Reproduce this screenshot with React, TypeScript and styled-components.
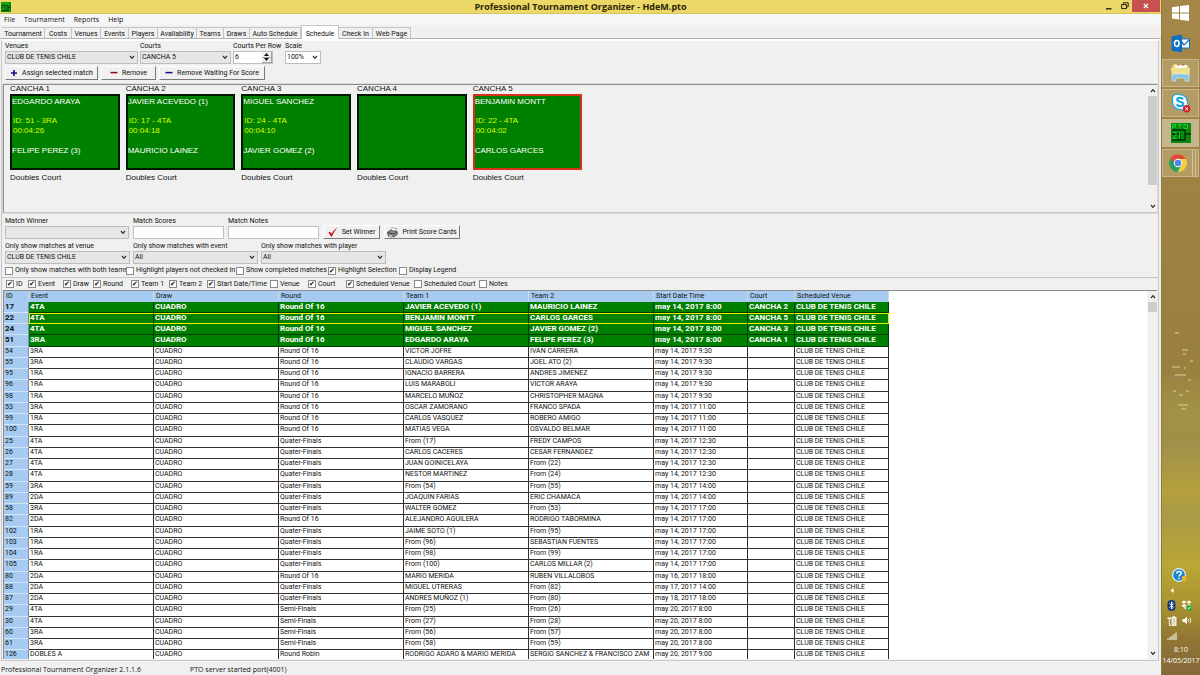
import React from "react";
import styled, { createGlobalStyle, css } from "styled-components";

const UI_FONT = 'Roboto, "Liberation Sans", sans-serif';
const SHELL_FONT = '"Open Sans", "Noto Sans", sans-serif';

const GlobalStyle = createGlobalStyle`
  * { box-sizing: border-box; }
  html, body { margin: 0; padding: 0; }
  body { background: #f0f0f0; color: #111; font: 7px/9px ${UI_FONT}; overflow: hidden; }
  button, input, select { font: inherit; color: inherit; margin: 0; }
`;

/* ---------- shell ---------- */

const Desktop = styled.div`
  display: flex;
  height: 100vh;
`;

const AppWindow = styled.div`
  flex: 1;
  min-width: 0;
  display: flex;
  flex-direction: column;
  background: #f0f0f0;
`;

const TitleBar = styled.header`
  display: flex;
  align-items: center;
  height: 14px;
  background: #ebd867;
  border-bottom: 1px solid #d6c462;
`;

const TitleSide = styled.div<{ $end?: boolean }>`
  width: 60px;
  display: flex;
  align-self: stretch;
  align-items: center;
  justify-content: ${(p) => (p.$end ? "flex-end" : "flex-start")};
  padding: ${(p) => (p.$end ? "0 1px 0 0" : "0 0 0 1px")};
`;

const Title = styled.h1`
  flex: 1;
  margin: 0;
  padding-top: 1px;
  text-align: center;
  font: 700 9px/12px ${SHELL_FONT};
  color: #2a2508;
`;

const CaptionButton = styled.button<{ $close?: boolean }>`
  align-self: flex-start;
  display: grid;
  place-items: center;
  width: ${(p) => (p.$close ? 28 : 16)}px;
  height: 12px;
  padding: 0;
  border: 0;
  background: ${(p) => (p.$close ? "#c75050" : "transparent")};
`;

const MenuBar = styled.nav`
  display: flex;
  align-items: center;
  gap: 9px;
  height: 11px;
  padding: 1px 0 0 4px;
  background: #f5f6f8;
`;

const MenuItem = styled.button`
  padding: 0;
  border: 0;
  background: none;
  font: 7px/10px ${SHELL_FONT};
`;

const TabStrip = styled.div`
  display: flex;
  align-items: flex-end;
  height: 14px;
  padding-left: 2px;
  border-bottom: 1px solid #b4b4b4;
`;

const Tab = styled.button<{ $width: number; $active?: boolean }>`
  width: ${(p) => p.$width}px;
  height: 11px;
  padding: 2px 0 0;
  border: 1px solid #c4c4c4;
  border-width: 1px 1px 0 0;
  background: #f0f0f0;
  text-align: center;
  line-height: 8px;
  white-space: nowrap;
  ${(p) =>
    p.$active &&
    css`
      height: 14px;
      margin-bottom: -1px;
      border-left-width: 1px;
      background: #fff;
    `}
`;

const Page = styled.main`
  flex: 1;
  min-height: 0;
  display: flex;
  flex-direction: column;
  margin: 0 2px 0 1px;
  border: 1px solid #c8c8c8;
  border-top: 2px solid #fff;
  background: #f0f0f0;
`;

const StatusBar = styled.footer`
  display: flex;
  align-items: center;
  height: 14px;
  padding: 4px 0 0 1px;
  font: 7px/10px ${SHELL_FONT};
`;

const StatusCell = styled.span`
  width: 189px;
  white-space: nowrap;
`;

/* ---------- form parts ---------- */

const ControlRow = styled.div<{ $gap: number; $top?: number }>`
  display: flex;
  align-items: flex-end;
  gap: ${(p) => p.$gap}px;
  padding: ${(p) => p.$top ?? 0}px 3px 0;
`;

const Field = styled.label<{ $width: number; $after?: number }>`
  display: flex;
  flex-direction: column;
  width: ${(p) => p.$width}px;
  margin-right: ${(p) => p.$after ?? 0}px;
  white-space: nowrap;
`;

const SelectBox = styled.span<{ $plain?: boolean }>`
  position: relative;
  display: block;
  height: 13px;
  border: 1px solid #bcbcbc;
  background: ${(p) => (p.$plain ? "#fff" : "#e6e6e6")};

  select {
    display: block;
    width: 100%;
    height: 11px;
    padding: 0 10px 0 1px;
    border: 0;
    outline: 0;
    appearance: none;
    background: transparent;
    line-height: 11px;
  }
  svg {
    position: absolute;
    right: 2px;
    top: 3px;
    pointer-events: none;
  }
`;

const TextInput = styled.input`
  width: 100%;
  height: 13px;
  padding: 0 2px;
  border: 1px solid #c0c0c0;
  background: #fff;
  outline: 0;
`;

const NumberBox = styled.span`
  display: flex;
  height: 13px;
  border: 1px solid #c0c0c0;
  background: #fff;

  input {
    flex: 1;
    min-width: 0;
    padding: 0 1px;
    border: 0;
    outline: 0;
    appearance: textfield;
    background: transparent;
  }
  input::-webkit-inner-spin-button { appearance: none; }
`;

const Spinner = styled.span`
  display: flex;
  flex-direction: column;
  width: 10px;

  button {
    flex: 1;
    display: grid;
    place-items: center;
    min-height: 0;
    padding: 0;
    border: 1px solid #a0a0a0;
    border-width: 0 1px 1px 0;
    background: #f0f0f0;
  }
`;

const PushButton = styled.button<{ $width: number }>`
  display: flex;
  align-items: center;
  justify-content: center;
  gap: 4px;
  width: ${(p) => p.$width}px;
  height: 14px;
  padding: 0;
  border: 1px solid;
  border-color: #fff #7a7a7a #7a7a7a #fff;
  background: #f0f0f0;
  white-space: nowrap;

  svg { flex: none; }
`;

const Check = styled.label<{ $width: number }>`
  display: flex;
  align-items: center;
  gap: 2px;
  width: ${(p) => p.$width}px;
  white-space: nowrap;

  input {
    flex: none;
    display: grid;
    place-items: center;
    width: 8px;
    height: 8px;
    appearance: none;
    border: 1px solid #8a8a8a;
    background: #fff;
  }
  input:checked::after {
    content: "✔";
    font: 7px/6px "DejaVu Sans", sans-serif;
    color: #111;
  }
`;

const CheckRow = styled.div<{ $rule?: boolean }>`
  display: flex;
  align-items: center;
  height: 13px;
  padding-left: ${(p) => (p.$rule ? 4 : 3)}px;
  border-top: ${(p) => (p.$rule ? "1px solid #c4c4c4" : "0")};
`;

const Toolbar = styled.section`
  padding: 1px 0 4px;
`;

/* ---------- courts ---------- */

const CourtsPane = styled.section`
  display: flex;
  height: 129px;
  margin: 0 1px 0 1px;
  border: 1px solid #8c8c8c;
  border-width: 1px 0 1px 1px;
  border-bottom-color: #c4c4c4;
  outline: 1px solid #dcdcdc;
  overflow: hidden;
`;

const CourtGrid = styled.div`
  display: grid;
  grid-template-columns: repeat(6, 1fr);
  gap: 6px;
  width: 688px;
  margin-left: 6px;
  font: 8px/10px "Liberation Sans", Arial, sans-serif;
`;

const CourtName = styled.div`
  height: 9px;
  line-height: 8px;
`;

const CourtCard = styled.div<{ $selected?: boolean }>`
  height: 76px;
  margin-bottom: 3px;
  padding-top: 1px;
  border: 2px solid ${(p) => (p.$selected ? "#d8301c" : "#001800")};
  background: #008000;
  color: #fff;
  white-space: nowrap;
`;

const MatchMeta = styled.div`
  padding: 9px 0 10px 1px;
  color: #d8ff00;
`;

const Spacer = styled.div`
  flex: 1;
`;

/* ---------- scroll bar ---------- */

const ScrollTrack = styled.div`
  display: flex;
  flex-direction: column;
  width: 10px;
  background: #f0f0f0;
  border-left: 1px solid #f4f4f4;

  button {
    display: grid;
    place-items: center;
    height: 11px;
    padding: 0;
    border: 0;
    background: transparent;
  }
`;

const ScrollThumb = styled.div<{ $size: number }>`
  height: ${(p) => p.$size}px;
  background: #cdcdcd;
`;

/* ---------- match form / grid ---------- */

const MatchForm = styled.section`
  padding-top: 4px;
`;

const GridPane = styled.section`
  flex: 1;
  min-height: 0;
  display: flex;
  margin: 0 1px 1px 1px;
  border: 1px solid #8c8c8c;
  border-width: 1px 0 0 1px;
  background: #fff;
  overflow: hidden;
`;

const Grid = styled.table`
  align-self: flex-start;
  table-layout: fixed;
  width: 885px;
  border-collapse: separate;
  border-spacing: 0;

  th, td {
    padding: 0 0 0 1px;
    overflow: hidden;
    white-space: nowrap;
    text-align: left;
    vertical-align: top;
    font-weight: inherit;
  }
  thead th {
    height: 11px;
    background: #a6caf0;
    border-right: 1px solid #c9d9ea;
    padding-left: 2px;
    line-height: 11px;
  }
  tbody th {
    background: #a6caf0;
    border-right: 1px solid #7a8fa5;
    border-bottom: 1px solid #d5e4f4;
    padding-left: 1px;
  }
  tbody td {
    border: solid #303030;
    border-width: 0 1px 1px 0;
  }
`;

const Row = styled.tr<{ $live?: boolean; $selected?: boolean }>`
  height: 11px;
  &:nth-child(4n) { height: 12px; }
  ${(p) =>
    p.$live &&
    css`
      font-size: 8px;
      font-weight: 700;
      &&& td { background: #008000; color: #fff; border-color: #003c00; }
    `}
  ${(p) =>
    p.$selected &&
    css`
      &&& td { border-top: 1px solid #e6f000; border-bottom-color: #e6f000; line-height: 8px; }
      &&& th + td { box-shadow: inset 1px 0 #e6f000; }
      &&& td:last-child { border-right-color: #e6f000; }
    `}
`;

/* ---------- taskbar ---------- */

const Taskbar = styled.aside`
  position: relative;
  display: flex;
  flex-direction: column;
  width: 39px;
  border-left: 1px solid #8e7a3c;
  background: linear-gradient(#a5874a 0%, #9f8144 30%, #99803f 55%, #a19044 60%, #a09048 66%, #b5a13c 73%, #a99a45 76%, #b9a636 84%, #a8922f 90%, #8f7434 95%, #84683a 100%);
  color: #fff;
`;

const TaskButton = styled.button<{ $state?: "open" | "active"; $stacked?: boolean }>`
  display: grid;
  place-items: center;
  height: 28px;
  margin: 0 1px 2px 0;
  padding: 0;
  border: 1px solid ${(p) => (p.$state ? "#c9b68a" : "transparent")};
  background: ${(p) => (p.$state === "active" ? "#c4b58c" : p.$state ? "#b39b66" : "transparent")};
  ${(p) =>
    p.$stacked &&
    css`
      padding-right: 5px;
      box-shadow: inset -2px 0 #b39b66, inset -3px 0 #d3c39c, inset -5px 0 #b39b66, inset -6px 0 #d3c39c;
    `}
  &:first-of-type { height: 27px; padding-bottom: 2px; }
`;

const Tray = styled.div`
  display: grid;
  grid-template-columns: 15px 15px;
  grid-auto-rows: 15px;
  place-items: center;
  padding-left: 2px;
`;

const TrayWide = styled.div<{ $height: number }>`
  display: grid;
  place-items: center;
  height: ${(p) => p.$height}px;
  padding-right: 4px;
`;

const Clock = styled.time`
  display: block;
  padding: 1px 0 9px;
  text-align: center;
  font: 7px/11px ${SHELL_FONT};
  white-space: nowrap;
`;

const Lights = styled.svg`
  position: absolute;
  left: 0;
  top: 325px;
  pointer-events: none;
`;

/* ---------- icons ---------- */

const Chevron = ({ up }: { up?: boolean }) => (
  <svg width="6" height="5" viewBox="0 0 6 5" aria-hidden="true">
    <path d={up ? "M1 4L3 1.6L5 4" : "M1 1L3 3.4L5 1"} fill="none" stroke="#333" strokeWidth="1.2" />
  </svg>
);

const Triangle = ({ up }: { up?: boolean }) => (
  <svg width="5" height="3" viewBox="0 0 5 3" aria-hidden="true">
    <path d={up ? "M2.5 0L5 3H0Z" : "M0 0H5L2.5 3Z"} fill="#111" />
  </svg>
);

const PlusIcon = () => (
  <svg width="8" height="8" viewBox="0 0 8 8" aria-hidden="true">
    <path d="M4 1V7M1 4H7" stroke="#10108c" strokeWidth="1.6" />
  </svg>
);

const MinusIcon = ({ color }: { color: string }) => (
  <svg width="8" height="8" viewBox="0 0 8 8" aria-hidden="true">
    <path d="M0.5 3.6H7.5" stroke={color} strokeWidth="1.5" />
  </svg>
);

const TickIcon = () => (
  <svg width="10" height="10" viewBox="0 0 10 10" aria-hidden="true">
    <path d="M0.5 5.5L2 4.8L3.6 6.8C5 4 7 1.8 9.4 0.4C7.2 3 5.4 6 4 9.6H3Z" fill="#d01010" />
  </svg>
);

const PrinterIcon = () => (
  <svg width="11" height="11" viewBox="0 0 11 11" aria-hidden="true">
    <path d="M3.5 4L5 0.8L9.6 1.6L8.4 5Z" fill="#fff" stroke="#777" strokeWidth="0.6" />
    <path d="M0.6 5L3.4 3.4L10 4.4L10.4 7.4L7 10L1 8.4Z" fill="#8d8f8d" stroke="#333" strokeWidth="0.7" />
    <path d="M1 5.6L7 7L10 5" fill="none" stroke="#222" strokeWidth="0.7" />
    <path d="M2 7.4L6 8.4L5 10.2L1.6 9.4Z" fill="#e8e8e8" stroke="#444" strokeWidth="0.5" />
  </svg>
);

const PtoIcon = ({ size }: { size: number }) => (
  <svg width={size} height={size} viewBox="0 0 20 20" aria-hidden="true">
    <rect width="20" height="20" fill="#078a10" />
    <path d="M1 7H14V17H1M14 11H20M1 11H9V17" fill="none" stroke="#032f05" strokeWidth="1.4" />
    <path d="M1.5 6V1.5H4.5V4H1.5M7 1.5H11M9 1.5V6M13 1.5H16.5V5.5H13Z" fill="none" stroke="#23d32c" strokeWidth="0.9" />
    <path d="M2 9.5H5V12L2 15.5H5.5M8.5 9.5V15.5" fill="none" stroke="#23d32c" strokeWidth="0.9" />
  </svg>
);

const WindowsIcon = () => (
  <svg width="17" height="16" viewBox="0 0 17 16" aria-hidden="true">
    <path d="M0 2.3L7 1.3V7.5H0ZM8 1.1L17 0V7.5H8ZM0 8.4H7V14.6L0 13.6ZM8 8.4H17V16L8 14.8Z" fill="#fff" />
  </svg>
);

const OutlookIcon = () => (
  <svg width="19" height="19" viewBox="0 0 19 19" aria-hidden="true">
    <rect x="9" y="5" width="9.5" height="9" fill="#fff" stroke="#1172c4" />
    <path d="M10 7L13 11L18 6" fill="none" stroke="#1172c4" strokeWidth="1.3" />
    <path d="M0.5 2.4L11 0.4V18.6L0.5 16.6Z" fill="#0f6fc2" />
    <ellipse cx="5.8" cy="9.5" rx="2.3" ry="2.9" fill="none" stroke="#fff" strokeWidth="1.5" />
  </svg>
);

const FolderIcon = () => (
  <svg width="21" height="20" viewBox="0 0 21 20" aria-hidden="true">
    <path d="M2 3L4 1H8L9 2.4H18L19 4V9H2Z" fill="#e9d27a" />
    <path d="M5 2H17V5H5Z" fill="#fbfbf2" />
    <path d="M7 2H9M12 2H14" stroke="#b35a3c" />
    <path d="M1 5H20L19 15H2Z" fill="#f3e08c" />
    <path d="M2 18V13Q2 11 4 11H17Q19 11 19 13V18H15V15H6V18Z" fill="#86c5e3" stroke="#d5eef8" strokeWidth="0.6" />
  </svg>
);

const SkypeIcon = () => (
  <svg width="20" height="20" viewBox="0 0 20 20" aria-hidden="true">
    <circle cx="6" cy="6" r="5.4" fill="#1ba5e0" />
    <circle cx="12" cy="12" r="5.6" fill="#1ba5e0" />
    <circle cx="9" cy="9" r="8" fill="#1ba5e0" />
    <circle cx="6" cy="6" r="4.2" fill="#fff" />
    <circle cx="12" cy="12" r="4.4" fill="#fff" />
    <circle cx="9" cy="9" r="6.8" fill="#fff" />
    <path d="M12 6.4C11 4.2 6.2 4.2 6.2 6.8C6.2 9.4 12.2 8.2 12.2 11C12.2 13.8 7 13.8 5.8 11.2" fill="none" stroke="#1ba5e0" strokeWidth="2.2" />
    <circle cx="15.6" cy="15.8" r="3.8" fill="#d3202f" />
    <path d="M14.2 14.4L17 17.2M17 14.4L14.2 17.2" stroke="#fff" strokeWidth="1" />
  </svg>
);

const ChromeIcon = () => (
  <svg width="18" height="18" viewBox="0 0 18 18" aria-hidden="true">
    <circle cx="9" cy="9" r="9" fill="#f7ce3c" />
    <path d="M9 9L1.2 4.5A9 9 0 0 0 8.6 18L12.4 11.2Z" fill="#27a05a" />
    <path d="M1.2 4.5A9 9 0 0 1 16.9 5H9Q6 5.4 5.4 9Z" fill="#dd4b3c" />
    <circle cx="9" cy="9" r="4.2" fill="#fff" />
    <circle cx="9" cy="9" r="3.3" fill="#4a86e8" />
  </svg>
);

const HelpIcon = () => (
  <svg width="14" height="14" viewBox="0 0 14 14" aria-hidden="true">
    <circle cx="7" cy="7" r="6.4" fill="#1b87cf" stroke="#e8f4fb" strokeWidth="1.1" />
    <path d="M4.8 5.4C4.8 2.8 9.4 2.8 9.2 5.4C9 7 7 6.8 7 8.6M7 9.8V11.2" fill="none" stroke="#fff" strokeWidth="1.5" />
    <rect x="10" y="8" width="4" height="5" rx="1" fill="#f0b42c" />
  </svg>
);

const BluetoothIcon = () => (
  <svg width="9" height="11" viewBox="0 0 9 11" aria-hidden="true">
    <rect x="0.5" width="8" height="11" rx="4" fill="#173d7c" />
    <path d="M2.4 3.4L6.4 7.2L4.5 9V2L6.4 3.8L2.4 7.6" fill="none" stroke="#fff" strokeWidth="0.9" />
  </svg>
);

const DropboxIcon = () => (
  <svg width="11" height="11" viewBox="0 0 11 11" aria-hidden="true">
    <path d="M3 0.5L5.5 2L3 3.8L0.5 2.2ZM8 0.5L10.5 2.2L8 3.8L5.5 2ZM3 4L5.5 5.6L3 7.4L0.5 5.6ZM8 4L10.5 5.6L8 7.4L5.5 5.6ZM3 8L5.5 6.6L7 8L5 9.6Z" fill="#fff" />
    <circle cx="8" cy="8" r="3" fill="#3aa63c" />
    <path d="M6.6 8L7.7 9L9.5 7" fill="none" stroke="#fff" strokeWidth="0.9" />
  </svg>
);

const BatteryIcon = () => (
  <svg width="10" height="10" viewBox="0 0 10 10" aria-hidden="true">
    <rect x="5" y="1.4" width="4" height="8" fill="#d9d3bd" stroke="#fff" strokeWidth="0.9" />
    <path d="M6 0.6H8M0.6 2.5H4M1.2 1V2.5M3.4 1V2.5M2.3 3V9.4H4" fill="none" stroke="#fff" strokeWidth="0.9" />
  </svg>
);

const VolumeIcon = () => (
  <svg width="10" height="9" viewBox="0 0 10 9" aria-hidden="true">
    <path d="M0.5 3H2.5L5 0.8V8.2L2.5 6H0.5Z" fill="#fff" />
    <path d="M6.4 3Q7.2 4.5 6.4 6M8 1.8Q9.6 4.5 8 7.2" fill="none" stroke="#fff" strokeWidth="0.8" />
  </svg>
);

const SignalIcon = () => (
  <svg width="10" height="8" viewBox="0 0 10 8" aria-hidden="true">
    <path d="M1 8V6.4M3 8V5M5 8V3.4M7 8V2M9 8V0.4" stroke="#f2eedd" strokeWidth="1.2" />
  </svg>
);

/* ---------- data ---------- */

const tabs: [string, number][] = [
  ["Tournament", 43], ["Costs", 27], ["Venues", 29], ["Events", 28], ["Players", 29], ["Availability", 39],
  ["Teams", 27], ["Draws", 26], ["Auto Schedule", 51], ["Schedule", 38], ["Check In", 34], ["Web Page", 38],
];

type Court = { name: string; top?: string; id?: string; time?: string; bottom?: string; selected?: boolean };
const courts: Court[] = [
  { name: "CANCHA 1", top: "EDGARDO ARAYA", id: "ID: 51 - 3RA", time: "00:04:26", bottom: "FELIPE PEREZ (3)" },
  { name: "CANCHA 2", top: "JAVIER ACEVEDO (1)", id: "ID: 17 - 4TA", time: "00:04:18", bottom: "MAURICIO LAINEZ" },
  { name: "CANCHA 3", top: "MIGUEL SANCHEZ", id: "ID: 24 - 4TA", time: "00:04:10", bottom: "JAVIER GOMEZ (2)" },
  { name: "CANCHA 4" },
  { name: "CANCHA 5", top: "BENJAMIN MONTT", id: "ID: 22 - 4TA", time: "00:04:02", bottom: "CARLOS GARCES", selected: true },
];

const options: [string, number, boolean][] = [
  ["Only show matches with both teams", 121, false],
  ["Highlight players not checked in", 110, false],
  ["Show completed matches", 92, false],
  ["Highlight Selection", 71, true],
  ["Display Legend", 60, false],
];

const columnToggles: [string, number, boolean][] = [
  ["ID", 22, true], ["Event", 35, true], ["Draw", 30, true], ["Round", 38, true], ["Team 1", 38, true],
  ["Team 2", 38, true], ["Start Date/Time", 63, true], ["Venue", 38, false], ["Court", 38, true],
  ["Scheduled Venue", 68, true], ["Scheduled Court", 65, false], ["Notes", 40, false],
];

const columns: [string, number][] = [
  ["ID", 25], ["Event", 125], ["Draw", 125], ["Round", 125], ["Team 1", 125], ["Team 2", 125],
  ["Start Date Time", 94], ["Court", 47], ["Scheduled Venue", 94],
];

const R16 = "Round Of 16";
const QF = "Quater-Finals";
const SF = "Semi-Finals";

// id, event, round, team 1, team 2, start, court
const matches: [number, string, string, string, string, string, string?][] = [
  [17, "4TA", R16, "JAVIER ACEVEDO (1)", "MAURICIO LAINEZ", "14, 2017 8:00", "CANCHA 2"],
  [22, "4TA", R16, "BENJAMIN MONTT", "CARLOS GARCES", "14, 2017 8:00", "CANCHA 5"],
  [24, "4TA", R16, "MIGUEL SANCHEZ", "JAVIER GOMEZ (2)", "14, 2017 8:00", "CANCHA 3"],
  [51, "3RA", R16, "EDGARDO ARAYA", "FELIPE PEREZ (3)", "14, 2017 8:00", "CANCHA 1"],
  [54, "3RA", R16, "VICTOR JOFRE", "IVAN CARRERA", "14, 2017 9:30"],
  [55, "3RA", R16, "CLAUDIO VARGAS", "JOEL ATO (2)", "14, 2017 9:30"],
  [95, "1RA", R16, "IGNACIO BARRERA", "ANDRES JIMENEZ", "14, 2017 9:30"],
  [96, "1RA", R16, "LUIS MARABOLI", "VICTOR ARAYA", "14, 2017 9:30"],
  [98, "1RA", R16, "MARCELO MUÑOZ", "CHRISTOPHER MAGNA", "14, 2017 9:30"],
  [53, "3RA", R16, "OSCAR ZAMORANO", "FRANCO SPADA", "14, 2017 11:00"],
  [99, "1RA", R16, "CARLOS VASQUEZ", "ROBERO AMIGO", "14, 2017 11:00"],
  [100, "1RA", R16, "MATIAS VEGA", "OSVALDO BELMAR", "14, 2017 11:00"],
  [25, "4TA", QF, "From (17)", "FREDY CAMPOS", "14, 2017 12:30"],
  [26, "4TA", QF, "CARLOS CACERES", "CESAR FERNANDEZ", "14, 2017 12:30"],
  [27, "4TA", QF, "JUAN GOINICELAYA", "From (22)", "14, 2017 12:30"],
  [28, "4TA", QF, "NESTOR MARTINEZ", "From (24)", "14, 2017 12:30"],
  [59, "3RA", QF, "From (54)", "From (55)", "14, 2017 14:00"],
  [89, "2DA", QF, "JOAQUIN FARIAS", "ERIC CHAMACA", "14, 2017 14:00"],
  [58, "3RA", QF, "WALTER GOMEZ", "From (53)", "14, 2017 17:00"],
  [82, "2DA", R16, "ALEJANDRO AGUILERA", "RODRIGO TABORMINA", "14, 2017 17:00"],
  [102, "1RA", QF, "JAIME SOTO (1)", "From (95)", "14, 2017 17:00"],
  [103, "1RA", QF, "From (96)", "SEBASTIAN FUENTES", "14, 2017 17:00"],
  [104, "1RA", QF, "From (98)", "From (99)", "14, 2017 17:00"],
  [105, "1RA", QF, "From (100)", "CARLOS MILLAR (2)", "14, 2017 17:00"],
  [80, "2DA", R16, "MARIO MERIDA", "RUBEN VILLALOBOS", "16, 2017 18:00"],
  [88, "2DA", QF, "MIGUEL UTRERAS", "From (82)", "17, 2017 14:00"],
  [87, "2DA", QF, "ANDRES MUÑOZ (1)", "From (80)", "18, 2017 18:00"],
  [29, "4TA", SF, "From (25)", "From (26)", "20, 2017 8:00"],
  [30, "4TA", SF, "From (27)", "From (28)", "20, 2017 8:00"],
  [60, "3RA", SF, "From (56)", "From (57)", "20, 2017 8:00"],
  [61, "3RA", SF, "From (58)", "From (59)", "20, 2017 8:00"],
  [126, "DOBLES A", "Round Robin", "RODRIGO ADARO & MARIO MERIDA", "SERGIO SANCHEZ & FRANCISCO ZAM", "20, 2017 9:00"],
];

/* ---------- composed parts ---------- */

const Select = ({ value, plain }: { value: string; plain?: boolean }) => (
  <SelectBox $plain={plain}>
    <select defaultValue={value}>
      <option>{value}</option>
    </select>
    <Chevron />
  </SelectBox>
);

const ScrollBar = ({ thumb }: { thumb: number }) => (
  <ScrollTrack>
    <button aria-label="Scroll up"><Chevron up /></button>
    <ScrollThumb $size={thumb} />
    <Spacer />
    <button aria-label="Scroll down"><Chevron /></button>
  </ScrollTrack>
);

const Checks = ({ items, rule }: { items: [string, number, boolean][]; rule?: boolean }) => (
  <CheckRow $rule={rule}>
    {items.map(([label, width, on]) => (
      <Check key={label} $width={width}>
        <input type="checkbox" defaultChecked={on} />
        {label}
      </Check>
    ))}
  </CheckRow>
);

export default function App() {
  return (
    <>
      <GlobalStyle />
      <Desktop>
        <AppWindow>
          <TitleBar>
            <TitleSide><PtoIcon size={10} /></TitleSide>
            <Title>Professional Tournament Organizer - HdeM.pto</Title>
            <TitleSide $end>
              <CaptionButton aria-label="Minimize">
                <svg width="6" height="8"><path d="M0 6.8H5.5" stroke="#222" strokeWidth="1.4" /></svg>
              </CaptionButton>
              <CaptionButton aria-label="Restore">
                <svg width="8" height="8"><path d="M0.6 2.6H5.4V6.6H0.6ZM2.4 2.6V0.8H7.2V4.8H5.4" fill="none" stroke="#222" /></svg>
              </CaptionButton>
              <CaptionButton $close aria-label="Close">
                <svg width="6" height="6"><path d="M0.8 0.8L5 5M5 0.8L0.8 5" stroke="#fff" strokeWidth="1.2" /></svg>
              </CaptionButton>
            </TitleSide>
          </TitleBar>

          <MenuBar>
            {["File", "Tournament", "Reports", "Help"].map((m) => <MenuItem key={m}>{m}</MenuItem>)}
          </MenuBar>

          <TabStrip role="tablist">
            {tabs.map(([name, width]) => (
              <Tab key={name} role="tab" aria-selected={name === "Schedule"} $width={width} $active={name === "Schedule"}>
                {name}
              </Tab>
            ))}
          </TabStrip>

          <Page>
            <Toolbar>
              <ControlRow $gap={2}>
                <Field $width={133}>Venues<Select value="CLUB DE TENIS CHILE" /></Field>
                <Field $width={91}>Courts<Select value="CANCHA 5" /></Field>
                <Field $width={40} $after={10}>
                  Courts Per Row
                  <NumberBox>
                    <input type="number" defaultValue={6} />
                    <Spinner>
                      <button aria-label="More courts"><Triangle up /></button>
                      <button aria-label="Fewer courts"><Triangle /></button>
                    </Spinner>
                  </NumberBox>
                </Field>
                <Field $width={36}>Scale<Select value="100%" plain /></Field>
              </ControlRow>
              <ControlRow $gap={3} $top={2}>
                <PushButton $width={93}><PlusIcon />Assign selected match</PushButton>
                <PushButton $width={55}><MinusIcon color="#8c1010" />Remove</PushButton>
                <PushButton $width={106}><MinusIcon color="#10108c" />Remove Waiting For Score</PushButton>
              </ControlRow>
            </Toolbar>

            <CourtsPane>
              <CourtGrid>
                {courts.map((c) => (
                  <div key={c.name}>
                    <CourtName>{c.name}</CourtName>
                    <CourtCard $selected={c.selected}>
                      {c.top}
                      {c.id && <MatchMeta>{c.id}<br />{c.time}</MatchMeta>}
                      {c.bottom}
                    </CourtCard>
                    Doubles Court
                  </div>
                ))}
              </CourtGrid>
              <Spacer />
              <ScrollBar thumb={89} />
            </CourtsPane>

            <MatchForm>
              <ControlRow $gap={4}>
                <Field $width={124}>Match Winner<Select value="" /></Field>
                <Field $width={91}>Match Scores<TextInput type="text" /></Field>
                <Field $width={91}>Match Notes<TextInput type="text" /></Field>
                <PushButton $width={57}><TickIcon />Set Winner</PushButton>
                <PushButton $width={76}><PrinterIcon />Print Score Cards</PushButton>
              </ControlRow>
              <ControlRow $gap={3} $top={3}>
                <Field $width={125}>Only show matches at venue<Select value="CLUB DE TENIS CHILE" /></Field>
                <Field $width={125}>Only show matches with event<Select value="All" /></Field>
                <Field $width={125}>Only show matches with player<Select value="All" /></Field>
              </ControlRow>
              <Checks items={options} />
              <Checks items={columnToggles} rule />
            </MatchForm>

            <GridPane>
              <Grid>
                <colgroup>
                  {columns.map(([name, width]) => <col key={name} width={width} />)}
                </colgroup>
                <thead>
                  <tr>{columns.map(([name]) => <th key={name} scope="col">{name}</th>)}</tr>
                </thead>
                <tbody>
                  {matches.map(([id, event, round, team1, team2, start, court]) => (
                    <Row key={id} $live={!!court} $selected={id === 22}>
                      <th scope="row">{id}</th>
                      <td>{event}</td>
                      <td>CUADRO</td>
                      <td>{round}</td>
                      <td>{team1}</td>
                      <td>{team2}</td>
                      <td>may {start}</td>
                      <td>{court}</td>
                      <td>CLUB DE TENIS CHILE</td>
                    </Row>
                  ))}
                </tbody>
              </Grid>
              <Spacer />
              <ScrollBar thumb={10} />
            </GridPane>
          </Page>

          <StatusBar>
            <StatusCell>Professional Tournament Organizer 2.1.1.6</StatusCell>
            <StatusCell>PTO server started port(4001)</StatusCell>
          </StatusBar>
        </AppWindow>

        <Taskbar>
          <Lights width="38" height="90" viewBox="0 0 38 90" aria-hidden="true">
            <path d="M13 8H17M20 25H26M21 29H24M28 36H31M10 42H18M22 43H24M13 50H24M26 55H29M11 66H14M17 70H21M24 66H27M16 80H26M19 84H24" stroke="#d8cf8e" strokeWidth="1.4" opacity="0.7" />
            <path d="M9 45H16M12 53H19M20 68H22M28 60H31" stroke="#8f8f6a" strokeWidth="2" opacity="0.7" />
          </Lights>
          <TaskButton aria-label="Start"><WindowsIcon /></TaskButton>
          <TaskButton aria-label="Outlook"><OutlookIcon /></TaskButton>
          <TaskButton aria-label="File Explorer" $state="open"><FolderIcon /></TaskButton>
          <TaskButton aria-label="Skype" $state="open"><SkypeIcon /></TaskButton>
          <TaskButton aria-label="Professional Tournament Organizer" $state="active"><PtoIcon size={20} /></TaskButton>
          <TaskButton aria-label="Chrome" $state="open" $stacked><ChromeIcon /></TaskButton>
          <Spacer />
          <TrayWide $height={16}><HelpIcon /></TrayWide>
          <Tray>
            <svg width="4" height="5" aria-hidden="true"><path d="M3.5 0V5L0.5 2.5Z" fill="#fff" /></svg>
            <span />
            <BluetoothIcon /><DropboxIcon />
            <BatteryIcon /><VolumeIcon />
            <SignalIcon />
          </Tray>
          <Clock>8:10<br />14/05/2017</Clock>
        </Taskbar>
      </Desktop>
    </>
  );
}
